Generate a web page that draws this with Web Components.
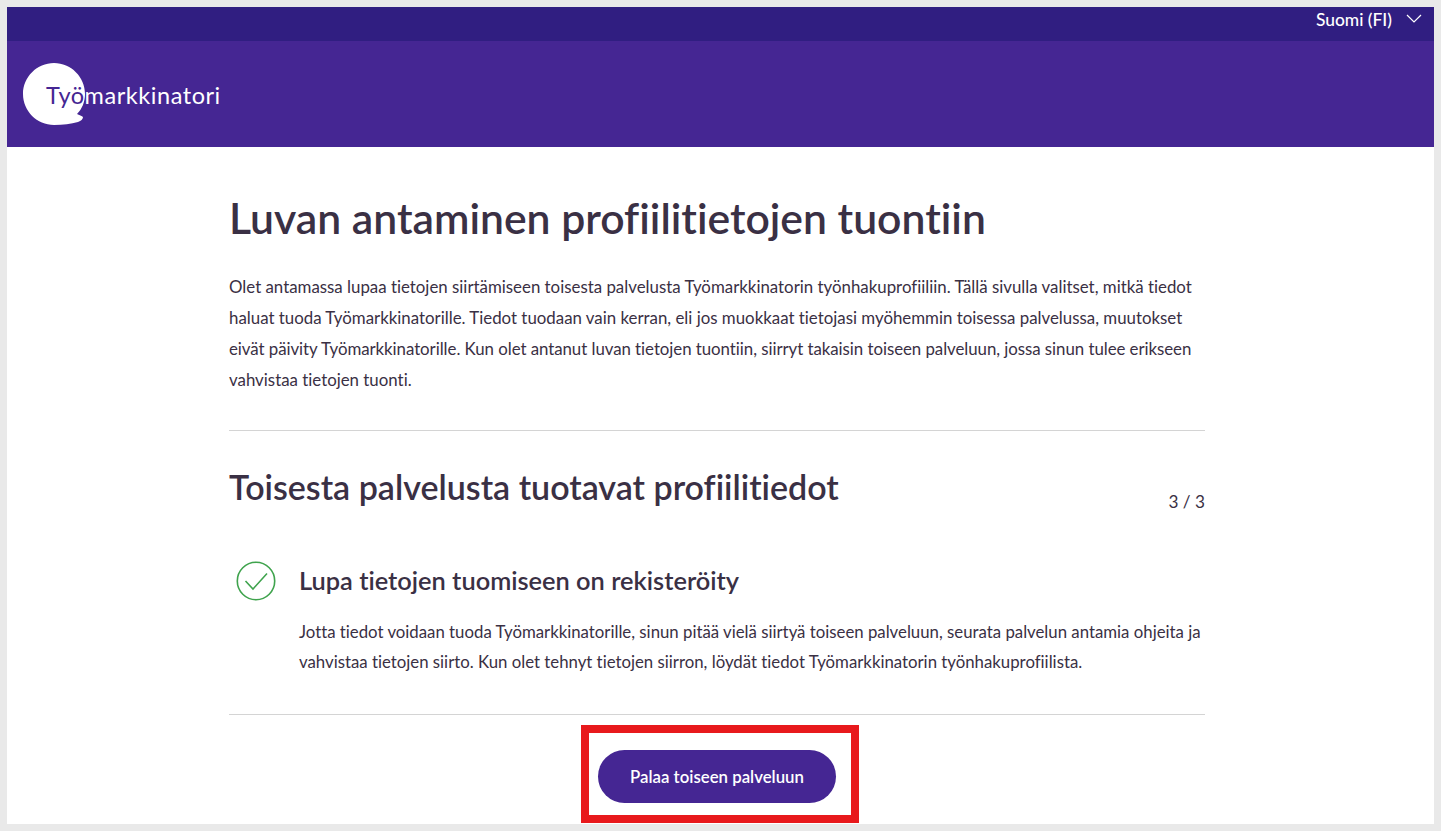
<!DOCTYPE html>
<html lang="fi"><head><meta charset="utf-8"><title>Työmarkkinatori</title>
<style>
html,body{margin:0;height:100%;overflow:hidden}
body{background:#e9e9e9;padding:7px;box-sizing:border-box;font-family:Lato,"Open Sans",sans-serif;color:#3a3044;font-variant-ligatures:none}
</style></head><body>
<tm-page>
<tm-topbar></tm-topbar>
<tm-header></tm-header>
<tm-main>
<h1 slot="title">Luvan antaminen profiilitietojen tuontiin</h1>
<tm-intro slot="intro">Olet antamassa lupaa tietojen siirtämiseen toisesta palvelusta Työmarkkinatorin työnhakuprofiiliin. Tällä sivulla valitset, mitkä tiedot<br>haluat tuoda Työmarkkinatorille. Tiedot tuodaan vain kerran, eli jos muokkaat tietojasi myöhemmin toisessa palvelussa, muutokset<br><span style="letter-spacing:-.05px">eivät päivity Työmarkkinatorille. Kun olet antanut luvan tietojen tuontiin, siirryt takaisin toiseen palveluun, jossa sinun tulee erikseen</span><br>vahvistaa tietojen tuonti.</tm-intro>
<tm-section-head slot="section" step="3 / 3">Toisesta palvelusta tuotavat profiilitiedot</tm-section-head>
<tm-status slot="status" heading="Lupa tietojen tuomiseen on rekisteröity">Jotta tiedot voidaan tuoda Työmarkkinatorille, sinun pitää vielä siirtyä toiseen palveluun, seurata palvelun antamia ohjeita ja<br>vahvistaa tietojen siirto. Kun olet tehnyt tietojen siirron, löydät tiedot Työmarkkinatorin työnhakuprofiilista.</tm-status>
<tm-action slot="action">Palaa toiseen palveluun</tm-action>
</tm-main>
</tm-page>
<script>
function def(name,html){customElements.define(name,class extends HTMLElement{constructor(){super();this.attachShadow({mode:'open'}).innerHTML=typeof html==='function'?html(this):html}
connectedCallback(){if(typeof html==='function'){this.shadowRoot.innerHTML=html(this)}}})}
def('tm-page',`<style>:host{display:block;background:#fff;height:817px;overflow:hidden}</style><slot></slot>`);
def('tm-topbar',`<style>:host{display:flex;justify-content:flex-end;align-items:flex-start;height:34px;background:#301e81;color:#fff;padding-right:12px;box-sizing:border-box;font-size:17.4px}
span{line-height:26px;font-weight:500;margin-right:14px}svg{margin-top:7px}</style><span>Suomi (FI)</span><svg width="16" height="9" viewBox="0 0 16 9" fill="none" stroke="#fff" stroke-width="1.2"><path d="M1 1l7 7 7-7"/></svg>`);
def('tm-header',`<style>:host{display:flex;align-items:center;height:106px;background:#452693;padding-left:16px;box-sizing:border-box}
.logo{position:relative;width:200px;height:62px}
svg{display:block}
.t{position:absolute;left:23px;top:18px;font:400 23.5px/28px Lato,sans-serif;letter-spacing:.55px;color:#fff;white-space:nowrap;font-variant-ligatures:none}
.t b{font-weight:400;color:#452693}</style>
<div class="logo"><svg width="62" height="62" viewBox="0 0 62 62"><path fill="#fff" d="M31 0C14 0 0 14 0 31s14 31 31 31c9 0 17-1 24-3 3-1 5-3 5-5-1-1-4-2-6-3 5-5 8-12 8-20C62 14 48 0 31 0z"/></svg><span class="t"><b>Työ</b>markkinatori</span></div>`);
def('tm-main',`<style>:host{display:block;padding:0 229px 0 222px}
::slotted(h1){margin:0;padding-top:42px;font:600 42.7px/58px Lato,sans-serif;font-variant-ligatures:none;color:#3a3044}
</style><slot name="title"></slot><slot name="intro"></slot><slot name="section"></slot><slot name="status"></slot><slot name="action"></slot>`);
def('tm-intro',`<style>:host{display:block;margin-top:24px;padding-bottom:35px;border-bottom:1px solid #d4d4d4;font-size:16.85px;line-height:31px;color:#3a3044;white-space:nowrap}</style><slot></slot>`);
def('tm-section-head',el=>`<style>:host{display:flex;justify-content:space-between;align-items:flex-start;padding-top:32px}
h2{margin:0;font:600 34px/48px Lato,sans-serif;font-variant-ligatures:none;color:#3a3044}span{font-size:17.2px;line-height:24px;margin-top:27px}</style><h2><slot></slot></h2><span>${el.getAttribute('step')||''}</span>`);
def('tm-status',el=>`<style>:host{display:grid;grid-template-columns:70px 1fr;margin-top:44px;padding-bottom:37px;border-bottom:1px solid #d4d4d4}
svg{margin:3px 0 0 7px;display:block}
h3{margin:0;font:600 25.4px/44px Lato,sans-serif;font-variant-ligatures:none;color:#3a3044}
p{grid-column:2;margin:15px 0 0;font-size:16.8px;line-height:30px;white-space:nowrap;color:#3a3044}</style>
<svg width="40" height="40" viewBox="0 0 40 40" fill="none" stroke="#3fa34d" stroke-width="1.6"><circle cx="20" cy="20" r="18.7"/><path d="M9.5 20l7.5 8L31 12.5"/></svg><h3>${el.getAttribute('heading')||''}</h3><p><slot></slot></p>`);
def('tm-action',`<style>:host{display:flex;justify-content:center;position:relative;padding-top:35px}
a{display:flex;align-items:center;justify-content:center;width:238px;height:53px;border-radius:27px;background:#452693;color:#fff;font-size:16.8px;font-weight:600}
.mark{position:absolute;left:352px;top:10px;width:278px;height:98px;box-sizing:border-box;border:8px solid #e8191c}</style><a><slot></slot></a><div class="mark"></div>`);
</script>
</body></html>
